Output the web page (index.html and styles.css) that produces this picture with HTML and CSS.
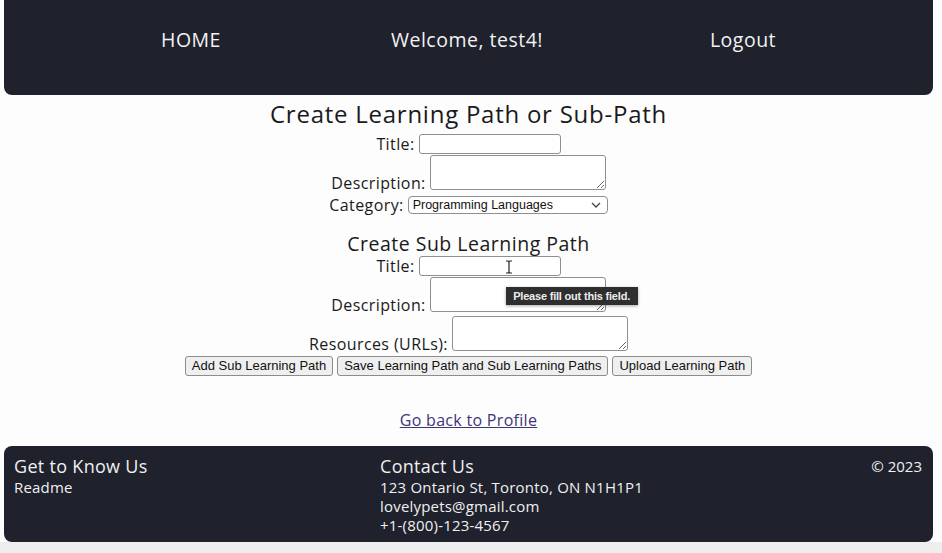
FILE: index.html
```html
<!DOCTYPE html>
<html lang="en">
<head>
<meta charset="utf-8">
<title>Create Learning Path</title>
<link rel="stylesheet" href="styles.css">
</head>
<body>
<header class="topbar">
  <nav class="nav">
    <a class="nav-item" href="#">HOME</a>
    <span class="nav-item">Welcome, test4!</span>
    <a class="nav-item" href="#">Logout</a>
  </nav>
</header>

<main class="content">
  <h1 class="title">Create Learning Path or Sub-Path</h1>
  <form class="form">
    <div class="row row-title">
      <label class="lbl">Title:</label>
      <input class="inp" type="text">
    </div>
    <div class="row row-desc">
      <label class="lbl">Description:</label>
      <textarea class="area"></textarea>
    </div>
    <div class="row row-cat">
      <label class="lbl">Category:</label>
      <span class="select-wrap">
        <select class="sel">
          <option>Programming Languages</option>
        </select>
        <svg class="chev" width="10" height="6" viewBox="0 0 10 6"><path d="M1 1 L5 5 L9 1" fill="none" stroke="#444" stroke-width="1.3"/></svg>
      </span>
    </div>

    <h2 class="subtitle">Create Sub Learning Path</h2>
    <div class="row row-title2">
      <label class="lbl">Title:</label>
      <span class="field-wrap">
        <input class="inp inp-focus" type="text">
        <svg class="ibeam" width="8" height="14" viewBox="0 0 8 14"><path d="M1 1 H3 Q4 1 4 2 V12 Q4 13 3 13 H1 M7 1 H5 Q4 1 4 2 M4 12 Q4 13 5 13 H7" fill="none" stroke="#222" stroke-width="1.2"/></svg>
        <span class="tooltip">Please fill out this field.</span>
      </span>
    </div>
    <div class="row row-desc2">
      <label class="lbl">Description:</label>
      <textarea class="area"></textarea>
    </div>
    <div class="row row-res">
      <label class="lbl">Resources (URLs):</label>
      <textarea class="area"></textarea>
    </div>
    <div class="buttons">
      <button type="button" class="btn">Add Sub Learning Path</button>
      <button type="button" class="btn">Save Learning Path and Sub Learning Paths</button>
      <button type="button" class="btn">Upload Learning Path</button>
    </div>
  </form>
  <p class="back"><a href="#" class="back-link">Go back to Profile</a></p>
</main>

<footer class="footer">
  <div class="fcol">
    <div class="fhead">Get to Know Us</div>
    <div class="fline">Readme</div>
  </div>
  <div class="fcol fmid">
    <div class="fhead">Contact Us</div>
    <div class="fline">123 Ontario St, Toronto, ON N1H1P1</div>
    <div class="fline">lovelypets@gmail.com</div>
    <div class="fline">+1-(800)-123-4567</div>
  </div>
  <div class="fcol fright">
    <div class="fcopy">© 2023</div>
  </div>
</footer>
</body>
</html>
```

FILE: styles.css
```css
html {
  background: #eeeeee;
}
body {
  margin: 0;
  padding: 0 9px 0 4px;
  background: #fdfdfd;
  font-family: "Open Sans", "DejaVu Sans", sans-serif;
  color: #1a1a1a;
}

.topbar {
  background: #1f212c;
  height: 95px;
  border-radius: 0 0 8px 8px;
  box-sizing: border-box;
  padding: 28px 52px 0 49px;
}
.nav {
  display: grid;
  grid-template-columns: 1fr 1fr 1fr;
}
.nav-item {
  text-align: center;
  color: #f2f2f2;
  text-decoration: none;
  font-size: 19.5px;
  line-height: 24px;
  letter-spacing: 0.5px;
}

.content {
  text-align: center;
}
.title {
  margin: 4px 0 0;
  font-size: 24px;
  line-height: 30px;
  font-weight: 500;
  letter-spacing: 0.75px;
}
.form {
  margin: 0;
}
.row {
  display: flex;
  justify-content: center;
  align-items: flex-end;
  gap: 4px;
}
.lbl {
  font-size: 16px;
  line-height: 20px;
  letter-spacing: 0.4px;
}
.row-title { margin-top: 5px; }
.row-desc { margin-top: 1px; }
.row-desc .lbl,
.row-desc2 .lbl,
.row-res .lbl { margin-bottom: -3px; }
.row-cat { margin-top: 5px; }
.row-title2 { margin-top: 0; }
.row-desc2 { margin-top: 1px; }
.row-res { margin-top: 4px; }

.inp {
  box-sizing: border-box;
  width: 142px;
  height: 20px;
  border: 1px solid #8f8f8f;
  border-radius: 3px;
  background: #fff;
  margin: 0;
  padding: 1px 3px;
}
.area {
  box-sizing: border-box;
  width: 176px;
  height: 35px;
  border: 1px solid #8f8f8f;
  border-radius: 3px;
  background: #fff;
  margin: 0;
  padding: 2px;
  font-family: "Liberation Mono", monospace;
  display: block;
}

.select-wrap {
  position: relative;
  display: block;
  margin-bottom: 1px;
}
.sel {
  appearance: none;
  -webkit-appearance: none;
  box-sizing: border-box;
  width: 200px;
  height: 18px;
  border: 1px solid #8f8f8f;
  border-radius: 4px;
  background: #fff;
  margin: 0;
  padding: 0 4px;
  font-family: "Liberation Sans", Arial, sans-serif;
  font-size: 12.5px;
  color: #111;
  display: block;
}
.chev {
  position: absolute;
  right: 7px;
  top: 6px;
}

.subtitle {
  margin: 17px 0 0;
  font-size: 19.5px;
  line-height: 24px;
  font-weight: 500;
  letter-spacing: 0.5px;
}

.field-wrap {
  position: relative;
  display: block;
}
.inp-focus {
  display: block;
}
.ibeam {
  position: absolute;
  left: 86px;
  top: 4px;
}
.tooltip {
  position: absolute;
  left: 87px;
  top: 31px;
  z-index: 2;
  width: 132px;
  height: 18px;
  box-sizing: border-box;
  background: #2e2e2e;
  color: #ececec;
  font-family: "Liberation Sans", Arial, sans-serif;
  font-size: 11px;
  font-weight: bold;
  letter-spacing: -0.2px;
  line-height: 18px;
  text-align: center;
  white-space: nowrap;
  box-shadow: 0 1px 3px rgba(0,0,0,0.35);
}

.buttons {
  margin-top: 5px;
  display: flex;
  justify-content: center;
  gap: 4px;
}
.btn {
  box-sizing: border-box;
  height: 20px;
  margin: 0;
  padding: 0 6px;
  border: 1px solid #8c8c8c;
  border-radius: 3px;
  background: #efefef;
  font-family: "Liberation Sans", Arial, sans-serif;
  font-size: 13px;
  color: #111;
  line-height: 18px;
}

.back {
  margin: 32px 0 0;
  line-height: 24px;
  font-size: 16px;
  letter-spacing: 0.3px;
}
.back-link {
  color: #3f3478;
}

.footer {
  margin-top: 14px;
  background: #1f212c;
  border-radius: 8px;
  color: #f0f0f0;
  display: flex;
  justify-content: space-between;
  padding: 9px 11px 7px 10px;
}
.fmid {
  padding-left: 4px;
}
.fhead {
  font-size: 18px;
  line-height: 23px;
  letter-spacing: 0.3px;
}
.fline {
  font-size: 15px;
  line-height: 19px;
  letter-spacing: 0.2px;
}
.fcopy {
  font-size: 15px;
  line-height: 23px;
}
```
